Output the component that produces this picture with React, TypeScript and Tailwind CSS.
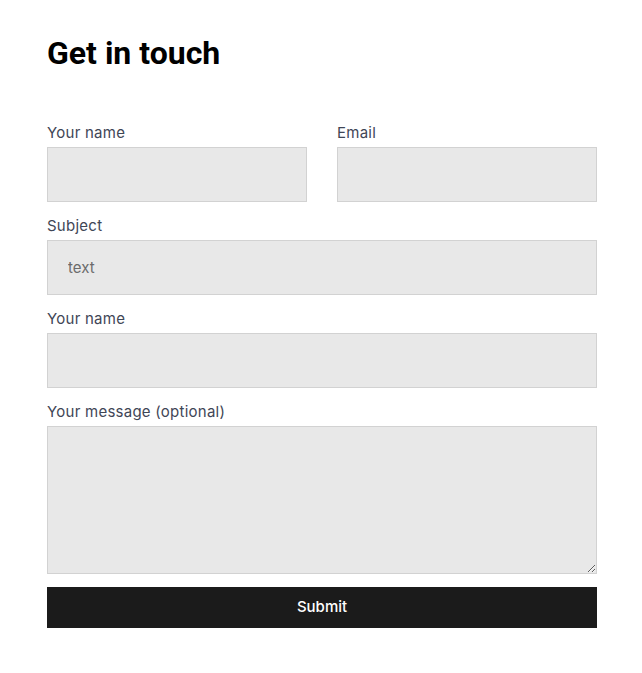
import React from 'react';

const labelCls = "block text-[15px] leading-[23px] tracking-[0.25px] text-[#3f4656] mb-[3px]";
const inputCls =
  "block w-full h-[55px] bg-[#e8e8e8] border border-[#d2d2d2] px-5 text-[15px] text-[#555] placeholder:text-[#6b6b6b] outline-none";

function Field({ label, children }: { label: string; children: React.ReactNode }) {
  return (
    <div>
      <label className={labelCls}>{label}</label>
      {children}
    </div>
  );
}

export default function App() {
  return (
    <div className="bg-white min-h-[673px] px-[47px] pt-[33px] font-['Inter',sans-serif]">
      <div className="w-[550px]">
        <h1 className="font-['Roboto',sans-serif] font-bold text-[32px] leading-10 text-black">
          Get in touch
        </h1>

        <form className="mt-[48px] flex flex-col gap-3" onSubmit={(e) => e.preventDefault()}>
          <div className="grid grid-cols-2 gap-[30px]">
            <Field label="Your name">
              <input className={inputCls} type="text" />
            </Field>
            <Field label="Email">
              <input className={inputCls} type="email" />
            </Field>
          </div>

          <Field label="Subject">
            <input className={inputCls} type="text" placeholder="text" />
          </Field>

          <Field label="Your name">
            <input className={inputCls} type="text" />
          </Field>

          <Field label="Your message (optional)">
            <textarea className="block w-full h-[148px] bg-[#e8e8e8] border border-[#d2d2d2] p-5 text-[15px] outline-none resize-y" />
          </Field>

          <button
            type="submit"
            className="mt-[1px] h-[41px] w-full bg-[#1b1b1b] text-white text-[15px] font-medium"
          >
            Submit
          </button>
        </form>
      </div>
    </div>
  );
}
